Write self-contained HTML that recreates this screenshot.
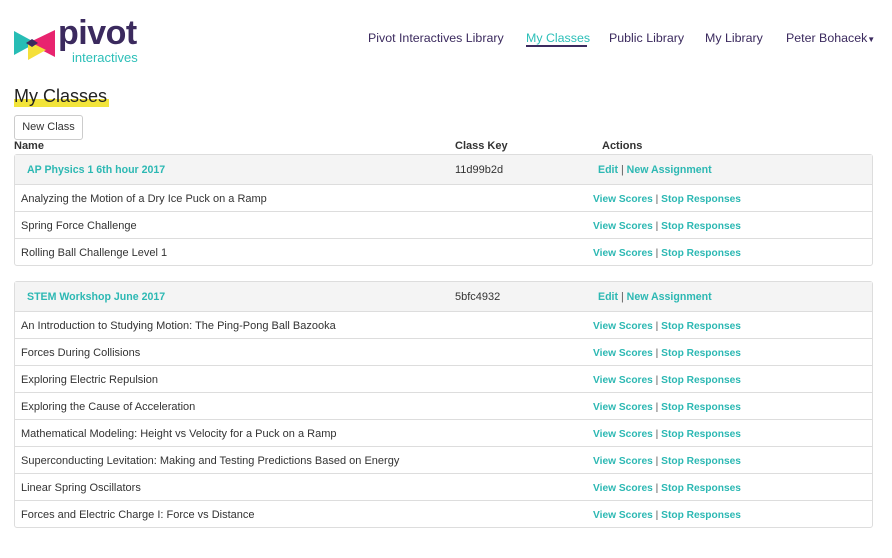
<!DOCTYPE html>
<html><head><style>
body{margin:0;width:892px;height:558px;background:#fff;font-family:"Liberation Sans",sans-serif;color:#333;position:relative;overflow:hidden}
.a{position:absolute;white-space:nowrap}
.nav{font-size:12.4px;color:#3b2a5e;top:31px}
.t{color:#2cb8b3;font-weight:bold;font-size:10.2px}
.panel{position:absolute;left:14px;width:857px;border:1px solid #ddd;border-radius:3px;background:#fff}
.hd{height:29px;background:#f4f4f4;position:relative}
.row{height:26px;border-top:1px solid #ddd;position:relative;font-size:11px}
.row span,.hd span{position:absolute;top:8px}
.hd span{top:9px}
.row span.t{top:9px}
.hd span.t{top:9px;font-size:10.6px}
b{color:#555;font-weight:normal}
</style></head><body>
<svg class="a" style="left:12px;top:28px" width="46" height="36" viewBox="0 0 46 36">
<polygon points="2,3 2,27 24,15" fill="#27bdb5"/>
<polygon points="43,2 43,29 16,15" fill="#e8246f"/>
<polygon points="16,13 16,32 34,22" fill="#f5e03a"/>
<polygon points="14,15 20,11 26,15 20,19" fill="#3b2a5e"/>
</svg>
<div class="a" style="left:58px;top:14px;font-size:34px;font-weight:bold;color:#3b2a5e;letter-spacing:-0.5px">pivot</div>
<div class="a" style="left:72px;top:50px;font-size:13px;color:#2cbfb8">interactives</div>
<div class="a nav" style="left:368px">Pivot Interactives Library</div>
<div class="a nav" style="left:526px;color:#2cbfb8">My Classes</div>
<div class="a" style="left:526px;top:45px;width:61px;height:2px;background:#3b2a5e"></div>
<div class="a nav" style="left:609px">Public Library</div>
<div class="a nav" style="left:705px">My Library</div>
<div class="a nav" style="left:786px">Peter Bohacek<span style="font-size:8px">▼</span></div>
<div class="a" style="left:14px;top:99px;width:95px;height:8px;background:#f2e43a"></div>
<div class="a" style="left:14px;top:86px;font-size:18px;color:#222">My Classes</div>
<div class="a" style="left:14px;top:115px;width:67px;height:23px;border:1px solid #ccc;border-radius:3px;font-size:11px;line-height:23px;text-align:center;color:#333">New Class</div>
<div class="a" style="left:14px;top:140px;font-size:11px;font-weight:bold">Name</div>
<div class="a" style="left:455px;top:140px;font-size:11px;font-weight:bold">Class Key</div>
<div class="a" style="left:602px;top:140px;font-size:11px;font-weight:bold">Actions</div>

<div class="panel" style="top:154px">
<div class="hd"><span class="t" style="left:12px">AP Physics 1 6th hour 2017</span><span style="left:440px;font-size:11px">11d99b2d</span><span class="t" style="left:583px">Edit <b>|</b> New Assignment</span></div>
<div class="row"><span style="left:6px">Analyzing the Motion of a Dry Ice Puck on a Ramp</span><span class="t" style="left:578px">View Scores <b>|</b> Stop Responses</span></div>
<div class="row"><span style="left:6px">Spring Force Challenge</span><span class="t" style="left:578px">View Scores <b>|</b> Stop Responses</span></div>
<div class="row"><span style="left:6px">Rolling Ball Challenge Level 1</span><span class="t" style="left:578px">View Scores <b>|</b> Stop Responses</span></div>
</div>

<div class="panel" style="top:281px">
<div class="hd"><span class="t" style="left:12px">STEM Workshop June 2017</span><span style="left:440px;font-size:11px">5bfc4932</span><span class="t" style="left:583px">Edit <b>|</b> New Assignment</span></div>
<div class="row"><span style="left:6px">An Introduction to Studying Motion: The Ping-Pong Ball Bazooka</span><span class="t" style="left:578px">View Scores <b>|</b> Stop Responses</span></div>
<div class="row"><span style="left:6px">Forces During Collisions</span><span class="t" style="left:578px">View Scores <b>|</b> Stop Responses</span></div>
<div class="row"><span style="left:6px">Exploring Electric Repulsion</span><span class="t" style="left:578px">View Scores <b>|</b> Stop Responses</span></div>
<div class="row"><span style="left:6px">Exploring the Cause of Acceleration</span><span class="t" style="left:578px">View Scores <b>|</b> Stop Responses</span></div>
<div class="row"><span style="left:6px">Mathematical Modeling: Height vs Velocity for a Puck on a Ramp</span><span class="t" style="left:578px">View Scores <b>|</b> Stop Responses</span></div>
<div class="row"><span style="left:6px">Superconducting Levitation: Making and Testing Predictions Based on Energy</span><span class="t" style="left:578px">View Scores <b>|</b> Stop Responses</span></div>
<div class="row"><span style="left:6px">Linear Spring Oscillators</span><span class="t" style="left:578px">View Scores <b>|</b> Stop Responses</span></div>
<div class="row"><span style="left:6px">Forces and Electric Charge I: Force vs Distance</span><span class="t" style="left:578px">View Scores <b>|</b> Stop Responses</span></div>
</div>
</body></html>
